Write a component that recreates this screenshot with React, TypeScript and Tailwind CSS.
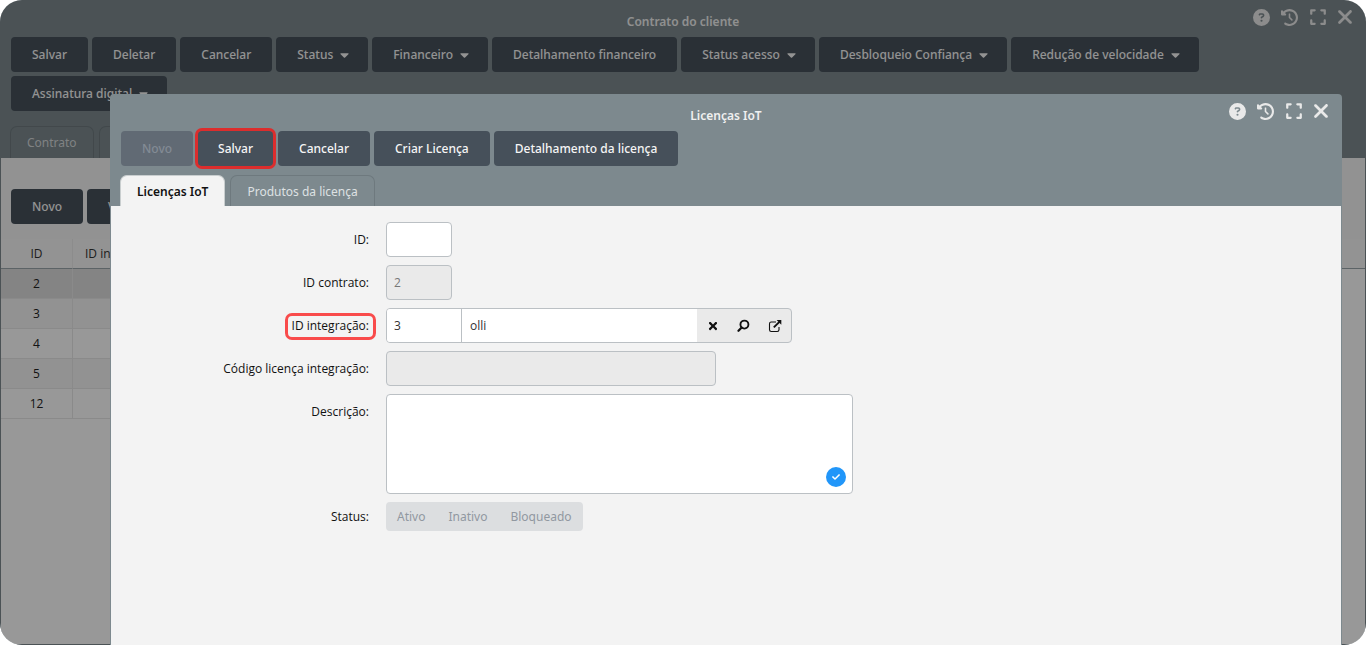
import type { ReactNode } from "react";
import { FaCaretDown, FaCheck, FaTimes } from "react-icons/fa";
import { FaCircleQuestion, FaClockRotateLeft, FaExpand, FaXmark } from "react-icons/fa6";

function WindowControls() {
  return (
    <div className="absolute right-[9px] top-[6px] flex items-center gap-[11px] text-[17px] text-[#e9e9e9]">
      <button type="button" aria-label="Ajuda"><FaCircleQuestion /></button>
      <button type="button" aria-label="Histórico"><FaClockRotateLeft /></button>
      <button type="button" aria-label="Tela cheia"><FaExpand className="text-[18px]" /></button>
      <button type="button" aria-label="Fechar" className="-ml-1"><FaXmark className="text-[22px]" /></button>
    </div>
  );
}

function ToolButton({
  children,
  menu,
  disabled,
  highlighted,
}: {
  children: ReactNode;
  menu?: boolean;
  disabled?: boolean;
  highlighted?: boolean;
}) {
  return (
    <button
      type="button"
      disabled={disabled}
      className={`${menu ? "pr-[19px]" : "pr-[21px]"} relative flex h-[35px] shrink-0 items-center gap-[7px] whitespace-nowrap rounded-[4px] bg-[#46505a] pl-[21px] font-['Noto_Sans',sans-serif] font-medium text-[#f5f5f5] disabled:bg-[#616a74] disabled:text-[#838b94]`}
    >
      {children}
      {menu && <FaCaretDown className="h-[14px] w-[9px]" />}
      {highlighted && (
        <span className="pointer-events-none absolute -inset-x-[2px] -inset-y-[3px] rounded-[7px] border-3 border-[#dc2d2d]" />
      )}
    </button>
  );
}

function SearchIcon() {
  return (
    <svg viewBox="0 0 14 14" className="size-[13px]" fill="none" stroke="currentColor" strokeWidth="2">
      <circle cx="8" cy="6" r="4.3" />
      <path d="M5 9.2 1.6 12.6" strokeWidth="2.4" strokeLinecap="round" />
    </svg>
  );
}

function OpenIcon() {
  return (
    <svg viewBox="0 0 14 14" className="size-[14px]" fill="none" stroke="currentColor">
      <path d="M8 3H3.2Q1.5 3 1.5 4.7v6.1q0 1.7 1.7 1.7h6.1q1.7 0 1.7-1.7V8" strokeWidth="1.1" />
      <path d="M5.8 8.4 11.4 2.8" strokeWidth="1.9" />
      <path d="M8.6 1H13.3V5.7Z" fill="currentColor" stroke="none" />
    </svg>
  );
}

const mainActions = [
  { label: "Salvar" },
  { label: "Deletar" },
  { label: "Cancelar" },
  { label: "Status", menu: true },
  { label: "Financeiro", menu: true },
  { label: "Detalhamento financeiro" },
  { label: "Status acesso", menu: true },
  { label: "Desbloqueio Confiança", menu: true },
  { label: "Redução de velocidade", menu: true },
  { label: "Assinatura digital", menu: true },
];

const ids = ["2", "3", "4", "5", "12"];

const title = "pb-[6px] pt-[13px] text-center font-['Noto_Sans',sans-serif] font-semibold leading-[18px] text-[#f0f0f0]";
const tab = "rounded-t-[7px] border border-b-0 px-4 font-['Noto_Sans',sans-serif]";

function ContractWindow() {
  return (
    <div className="flex min-h-screen flex-col bg-[#7d898e] px-px pb-px">
      <header className="relative">
        <h1 className={title}>Contrato do cliente</h1>
        <WindowControls />
      </header>
      <div className="flex flex-wrap gap-1 px-[10px]">
        {mainActions.map((a) => (
          <ToolButton key={a.label} menu={a.menu}>{a.label}</ToolButton>
        ))}
      </div>
      <nav className="mt-[15px] flex gap-[5px] px-[9px] text-[#d5d9db]">
        <button type="button" className={`${tab} h-8 border-[#6e797e]`}>Contrato</button>
        <button type="button" aria-label="Próxima aba" className={`${tab} h-8 w-24 border-[#6e797e]`} />
      </nav>
      <main className="flex-1 bg-[#fefefe]">
        <div className="flex gap-1 bg-[#f3f3f3] px-[10px] pb-[15px] pt-[31px]">
          <ToolButton>Novo</ToolButton>
          <ToolButton>Visualizar</ToolButton>
        </div>
        <table className="w-full table-fixed border-separate border-spacing-0 text-[#333]">
          <thead>
            <tr className="h-[30px] bg-[#f5f5f5]">
              <th className="w-[72px] border-b border-r border-b-[#9aa5aa] border-r-[#e9e9e9] font-normal">ID</th>
              <th className="border-b border-[#9aa5aa] pl-3 text-left font-normal">ID integração</th>
              <th aria-label="Ações" className="w-10 border-b border-[#9aa5aa]" />
            </tr>
          </thead>
          <tbody>
            {ids.map((id) => (
              <tr key={id} className="group h-[30px] text-[#222]">
                <td className="border-b border-r border-[#e6e6e6] text-center group-even:bg-[#f4f4f4] group-first:bg-[#dcdcdc]">{id}</td>
                <td className="border-b border-[#e6e6e6] group-even:bg-[#f4f4f4] group-first:bg-[#dcdcdc]" />
                <td />
              </tr>
            ))}
          </tbody>
        </table>
      </main>
    </div>
  );
}

function Row({ label, htmlFor, highlighted, children }: { label: string; htmlFor: string; highlighted?: boolean; children: ReactNode }) {
  return (
    <div className="grid grid-cols-[275px_1fr]">
      <div className="flex h-[35px] items-center justify-end pr-[17px]">
        <label htmlFor={htmlFor} className="relative">
          {label}
          {highlighted && (
            <span className="pointer-events-none absolute -inset-x-[7px] -bottom-[5px] -top-1 rounded-[7px] border-3 border-[#f94b4b]" />
          )}
        </label>
      </div>
      <div>{children}</div>
    </div>
  );
}

const field = "block h-[35px] rounded-[4px] border border-[#bbc0c4] bg-white px-[7px] text-[#333] disabled:bg-[#eaeaea] disabled:text-[#777]";
const iconButton = "flex w-[31px] items-center justify-center";

function LicenseDialog() {
  return (
    <section
      role="dialog"
      aria-labelledby="dialog-title"
      className="absolute bottom-0 left-[110px] right-6 top-[94px] flex flex-col rounded-t-[4px] bg-[#7d898e] px-px"
    >
      <header className="relative">
        <h2 id="dialog-title" className={title}>Licenças IoT</h2>
        <WindowControls />
      </header>
      <div className="flex flex-wrap gap-1 px-[10px]">
        <ToolButton disabled>Novo</ToolButton>
        <ToolButton highlighted>Salvar</ToolButton>
        <ToolButton>Cancelar</ToolButton>
        <ToolButton>Criar Licença</ToolButton>
        <ToolButton>Detalhamento da licença</ToolButton>
      </div>
      <nav className="mt-[9px] flex gap-[5px] px-[9px]">
        <button type="button" className={`${tab} h-[31px] border-[#c9cecf] bg-[#f3f3f3] pt-px font-semibold text-[#111]`}>Licenças IoT</button>
        <button type="button" className={`${tab} h-[31px] border-[#6e797e] pt-px text-[#dde1e3]`}>Produtos da licença</button>
      </nav>
      <form className="flex flex-1 flex-col gap-2 bg-[#f3f3f3] pt-4 text-[#111]">
        <Row label="ID:" htmlFor="id">
          <input id="id" className={`${field} w-[66px]`} />
        </Row>
        <Row label="ID contrato:" htmlFor="contract">
          <input id="contract" disabled defaultValue="2" className={`${field} w-[66px]`} />
        </Row>
        <Row label="ID integração:" htmlFor="integration" highlighted>
          <div className="flex h-[35px] w-[406px] overflow-hidden rounded-[4px] border border-[#bbc0c4] bg-[#eaeaea] pr-px">
            <input id="integration" defaultValue="3" className="w-[75px] border-r border-[#bbc0c4] bg-white px-[7px] text-[#333]" />
            <input aria-label="Nome da integração" defaultValue="olli" className="min-w-0 flex-1 bg-white px-2 text-[#333]" />
            <button type="button" aria-label="Limpar" className={iconButton}><FaTimes className="text-[12px]" /></button>
            <button type="button" aria-label="Buscar" className={iconButton}><SearchIcon /></button>
            <button type="button" aria-label="Abrir" className={iconButton}><OpenIcon /></button>
          </div>
        </Row>
        <Row label="Código licença integração:" htmlFor="code">
          <input id="code" disabled className={`${field} w-[330px]`} />
        </Row>
        <Row label="Descrição:" htmlFor="description">
          <div className="relative w-[467px]">
            <textarea id="description" className="block h-[100px] w-full resize-none rounded-[4px] border border-[#bbc0c4] bg-white p-2" />
            <span className="absolute bottom-[7px] right-[7px] flex size-5 items-center justify-center rounded-full bg-[#2196f9] text-white">
              <FaCheck className="text-[8px]" />
            </span>
          </div>
        </Row>
        <div className="grid grid-cols-[275px_1fr] items-center">
          <span id="status-label" className="pr-[17px] text-right">Status:</span>
          <div role="group" aria-labelledby="status-label" className="flex h-[29px] w-fit rounded-[4px] bg-[#dcdee0] font-['Noto_Sans',sans-serif] text-[#9198a0]">
            <button type="button" disabled className="px-[11px]">Ativo</button>
            <button type="button" disabled className="px-3">Inativo</button>
            <button type="button" disabled className="px-[11px]">Bloqueado</button>
          </div>
        </div>
      </form>
    </section>
  );
}

export default function App() {
  return (
    <div className="min-h-screen bg-white font-['Open_Sans','Noto_Sans',sans-serif] text-[12px] leading-[18px]">
      <div className="relative min-h-screen overflow-hidden rounded-[22px]">
        <ContractWindow />
        <div className="absolute inset-0 bg-black/40" />
        <LicenseDialog />
      </div>
    </div>
  );
}
